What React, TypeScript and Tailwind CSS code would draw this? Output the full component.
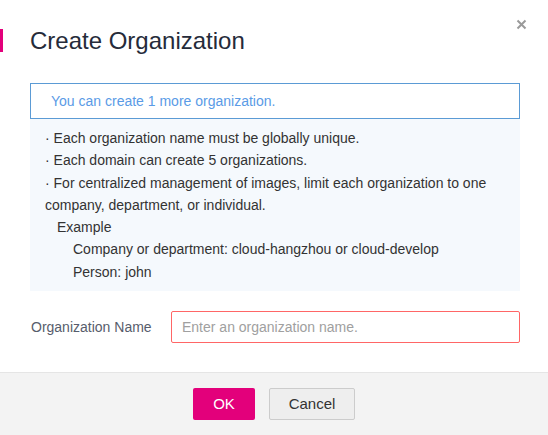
import React from 'react';

const notes = [
  '· Each organization name must be globally unique.',
  '· Each domain can create 5 organizations.',
  '· For centralized management of images, limit each organization to one company, department, or individual.',
];

export default function App() {
  return (
    <div className="relative w-[548px] h-[435px] bg-white flex flex-col font-['Liberation_Sans',Arial,sans-serif] text-[14px] text-[#333]">
      <button className="absolute right-[20px] top-[17px] w-[14px] h-[14px] flex items-center justify-center text-[#999]">
        <svg width="11" height="11" viewBox="0 0 11 11">
          <path d="M1.5 1.5 L9.5 9.5 M9.5 1.5 L1.5 9.5" stroke="#9a9a9a" strokeWidth="2" />
        </svg>
      </button>

      <div className="flex items-center pt-[29px]">
        <span className="w-[3px] h-[23px] bg-[#e3007b]" />
        <h1 className="ml-[27px] text-[24px] leading-[23px] text-[#252b3a]">Create Organization</h1>
      </div>

      <div className="ml-[30px] w-[490px] mt-[31px]">
        <div className="h-[36px] border border-[#5b9bd5] px-[20px] flex items-center text-[#5a9be6]">
          You can create 1 more organization.
        </div>
        <div className="bg-[#f5f9fd] px-[15px] pt-[8px] pb-[8px] leading-[22.3px] text-[#333]">
          {notes.map((n, i) => (
            <div key={i}>{n}</div>
          ))}
          <div className="pl-[12px]">Example</div>
          <div className="pl-[28px]">Company or department: cloud-hangzhou or cloud-develop</div>
          <div className="pl-[28px]">Person: john</div>
        </div>
      </div>

      <div className="flex items-center mt-[20px] ml-[30px] w-[490px]">
        <label className="w-[141px] shrink-0 pl-[1px] text-[#575d6c]">Organization Name</label>
        <input
          className="w-[349px] shrink-0 h-[32px] border border-[#f66] rounded-[2px] px-[10px] outline-none placeholder:text-[#a0a0a0]"
          placeholder="Enter an organization name."
        />
      </div>

      <div className="mt-auto h-[63px] border-t border-[#e5e5e5] bg-[#f3f3f3] flex justify-center gap-[14px] pt-[15px]">
        <button className="w-[62px] h-[32px] rounded-[2px] bg-[#e3007b] text-white text-[15px]">OK</button>
        <button className="w-[86px] h-[32px] rounded-[2px] bg-[#eeeeee] border border-[#cccccc] text-[#333] text-[15px]">
          Cancel
        </button>
      </div>
    </div>
  );
}
